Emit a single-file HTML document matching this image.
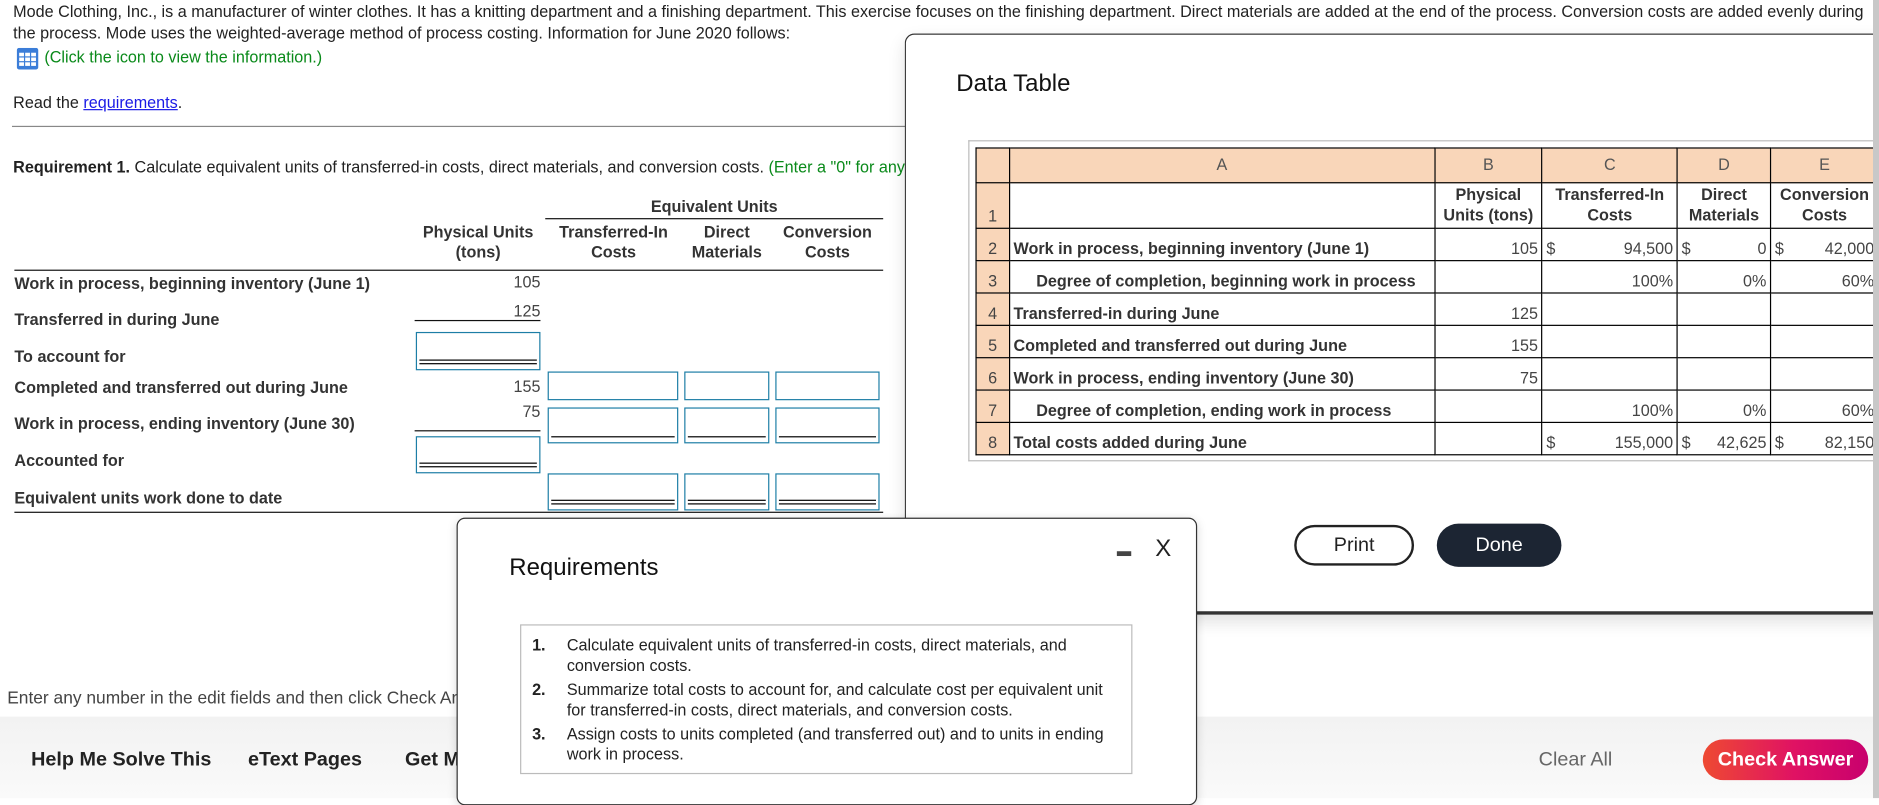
<!DOCTYPE html>
<html><head><meta charset="utf-8"><style>
*{box-sizing:border-box;margin:0;padding:0}
html,body{width:1879px;height:798px;overflow:hidden;background:#fff}
#w{position:absolute;left:0;top:0;width:1568px;height:666px;transform:scale(1.19834);transform-origin:0 0;font-family:"Liberation Sans",Arial,sans-serif;color:#222;font-size:13.5px}
.a{position:absolute;white-space:nowrap}
.b{font-weight:bold}
.c{text-align:center}
.r{text-align:right}
.ln{position:absolute;height:0;border-top:1.5px solid #111}
.inp{position:absolute;border:1px solid #1d7ea6;background:#fff}
.dbl{position:absolute;left:5px;right:5px;height:4px;border-top:1.5px solid #000;border-bottom:1.5px solid #000}
.sgl{position:absolute;left:5px;right:5px;border-top:1.3px solid #000}
table.dt{position:absolute;left:814px;top:123px;border-collapse:collapse;font-size:13.5px}
table.dt td{border:1.3px solid #000;height:27px;padding:0 3px;vertical-align:bottom;padding-bottom:2px;white-space:nowrap}
table.dt td.n{background:#f9d6b9;text-align:center;width:28px;padding:0 0 2px 0;color:#444}
table.dt tr.h td{background:#f9d6b9;color:#555;text-align:center;height:29px;vertical-align:middle}
</style></head><body><div id="w">
<div class="a" style="left:11px;top:2px;color:#222">Mode Clothing, Inc., is a manufacturer of winter clothes. It has a knitting department and a finishing department. This exercise focuses on the finishing department. Direct materials are added at the end of the process. Conversion costs are added evenly during</div>
<div class="a" style="left:11px;top:20px">the process. Mode uses the weighted-average method of process costing. Information for June 2020 follows:</div>
<svg class="a" style="left:14px;top:40px" width="18" height="18" viewBox="0 0 18 18"><rect x="0" y="0" width="18" height="18" rx="2" fill="#3b7dd8"/><g fill="#fff"><rect x="2" y="4" width="4" height="3"/><rect x="7" y="4" width="4" height="3"/><rect x="12" y="4" width="4" height="3"/><rect x="2" y="8" width="4" height="3"/><rect x="7" y="8" width="4" height="3"/><rect x="12" y="8" width="4" height="3"/><rect x="2" y="12" width="4" height="3"/><rect x="7" y="12" width="4" height="3"/><rect x="12" y="12" width="4" height="3"/></g></svg>
<div class="a" style="left:37px;top:40px;color:#0a8a1a">(Click the icon to view the information.)</div>
<div class="a" style="left:11px;top:78px">Read the <span style="color:#1a1ae6;text-decoration:underline">requirements</span>.</div>
<div class="a" style="left:10px;top:105px;width:750px;border-top:1px solid #888"></div>
<div class="a" style="left:11px;top:132px"><b>Requirement 1.</b> Calculate equivalent units of transferred-in costs, direct materials, and conversion costs. <span style="color:#0a8a1a">(Enter a "0" for any zero balances.)</span></div>

<div class="a b" style="left:455px;top:165px;width:282px;text-align:center;color:#333">Equivalent Units</div>
<div class="ln" style="left:455px;top:182px;width:282px"></div>
<div class="a b c" style="left:342px;top:185px;width:114px;line-height:17px;color:#333">Physical Units<br>(tons)</div>
<div class="a b c" style="left:452px;top:185px;width:120px;line-height:17px;color:#333">Transferred-In<br>Costs</div>
<div class="a b c" style="left:566px;top:185px;width:81px;line-height:17px;color:#333">Direct<br>Materials</div>
<div class="a b c" style="left:641px;top:185px;width:99px;line-height:17px;color:#333">Conversion<br>Costs</div>
<div class="ln" style="left:12px;top:225px;width:725px"></div>

<div class="a b" style="left:12px;top:229px;color:#333">Work in process, beginning inventory (June 1)</div>
<div class="a r" style="left:380px;top:228px;width:71px;color:#444">105</div>
<div class="a b" style="left:12px;top:259px;color:#333">Transferred in during June</div>
<div class="a r" style="left:380px;top:252px;width:71px;color:#444">125</div>
<div class="ln" style="left:346px;top:267px;width:105px;border-top-width:1px"></div>
<div class="inp" style="left:347px;top:277px;width:104px;height:32px"><div class="dbl" style="top:22px;left:2px;right:2px"></div></div>
<div class="a b" style="left:12px;top:290px;color:#333">To account for</div>
<div class="a b" style="left:12px;top:316px;color:#333">Completed and transferred out during June</div>
<div class="a r" style="left:380px;top:315px;width:71px;color:#444">155</div>
<div class="inp" style="left:457px;top:310px;width:109px;height:24px"></div>
<div class="inp" style="left:571px;top:310px;width:71px;height:24px"></div>
<div class="inp" style="left:647px;top:310px;width:87px;height:24px"></div>
<div class="a b" style="left:12px;top:346px;color:#333">Work in process, ending inventory (June 30)</div>
<div class="a r" style="left:380px;top:336px;width:71px;color:#444">75</div>
<div class="ln" style="left:346px;top:359px;width:105px;border-top-width:1px"></div>
<div class="inp" style="left:457px;top:340px;width:109px;height:30px"><div class="sgl" style="top:23px;left:2px;right:2px"></div></div>
<div class="inp" style="left:571px;top:340px;width:71px;height:30px"><div class="sgl" style="top:23px;left:2px;right:2px"></div></div>
<div class="inp" style="left:647px;top:340px;width:87px;height:30px"><div class="sgl" style="top:23px;left:2px;right:2px"></div></div>
<div class="inp" style="left:347px;top:364px;width:104px;height:31px"><div class="dbl" style="top:21px;left:2px;right:2px"></div></div>
<div class="a b" style="left:12px;top:377px;color:#333">Accounted for</div>
<div class="a b" style="left:12px;top:408px;color:#333">Equivalent units work done to date</div>
<div class="inp" style="left:457px;top:395px;width:109px;height:31px"><div class="dbl" style="top:21px;left:2px;right:2px"></div></div>
<div class="inp" style="left:571px;top:395px;width:71px;height:31px"><div class="dbl" style="top:21px;left:2px;right:2px"></div></div>
<div class="inp" style="left:647px;top:395px;width:87px;height:31px"><div class="dbl" style="top:21px;left:2px;right:2px"></div></div>
<div class="ln" style="left:12px;top:427px;width:725px;border-top-width:1px"></div>

<div class="a" style="left:6px;top:575px;font-size:14.5px;color:#444">Enter any number in the edit fields and then click Check Answer.</div>
<div class="a" style="left:0;top:598px;width:1568px;height:68px;background:linear-gradient(#f2f2f2,#fafafa)"></div>
<div class="a b" style="left:26px;top:625px;font-size:16.5px;color:#222">Help Me Solve This</div>
<div class="a b" style="left:207px;top:625px;font-size:16.5px;color:#222">eText Pages</div>
<div class="a b" style="left:338px;top:625px;font-size:16.5px;color:#222">Get More Help</div>
<div class="a" style="left:1284px;top:625px;font-size:16.5px;color:#666">Clear All</div>
<div class="a b c" style="left:1421px;top:617px;width:138px;height:34px;line-height:34px;border-radius:17px;background:linear-gradient(90deg,#ee4a32,#e01263 55%,#c8006e);color:#fff;font-size:16.5px">Check Answer</div>

<!-- Data table modal -->
<div class="a" style="left:755px;top:28px;width:820px;height:485px;background:#fff;border:1.5px solid #333;border-right:none;border-top-left-radius:8px;border-bottom:3px solid #333;box-shadow:0 6px 14px rgba(0,0,0,.12)"></div>
<div class="a" style="left:798px;top:59px;font-size:20px;color:#111">Data Table</div>
<div class="a" style="left:808px;top:117px;width:760px;height:268px;border:1px solid #bbb;border-right:none"></div>
<table class="dt">
<tr class="h"><td class="n" style="padding:0"></td><td style="width:355px">A</td><td style="width:90px">B</td><td style="width:113px">C</td><td style="width:78px">D</td><td style="width:90px">E</td></tr>
<tr><td class="n" style="height:38px">1</td><td></td><td class="b c" style="line-height:17px;color:#333">Physical<br>Units (tons)</td><td class="b c" style="line-height:17px;color:#333">Transferred-In<br>Costs</td><td class="b c" style="line-height:17px;color:#333">Direct<br>Materials</td><td class="b c" style="line-height:17px;color:#333">Conversion<br>Costs</td></tr>
<tr><td class="n">2</td><td class="b" style="color:#333">Work in process, beginning inventory (June 1)</td><td class="r" style="color:#444">105</td><td style="color:#444">$<span style="float:right">94,500</span></td><td style="color:#444">$<span style="float:right">0</span></td><td style="color:#444">$<span style="float:right">42,000</span></td></tr>
<tr><td class="n">3</td><td class="b" style="color:#333;padding-left:22px">Degree of completion, beginning work in process</td><td></td><td class="r" style="color:#444">100%</td><td class="r" style="color:#444">0%</td><td class="r" style="color:#444">60%</td></tr>
<tr><td class="n">4</td><td class="b" style="color:#333">Transferred-in during June</td><td class="r" style="color:#444">125</td><td></td><td></td><td></td></tr>
<tr><td class="n">5</td><td class="b" style="color:#333">Completed and transferred out during June</td><td class="r" style="color:#444">155</td><td></td><td></td><td></td></tr>
<tr><td class="n">6</td><td class="b" style="color:#333">Work in process, ending inventory (June 30)</td><td class="r" style="color:#444">75</td><td></td><td></td><td></td></tr>
<tr><td class="n">7</td><td class="b" style="color:#333;padding-left:22px">Degree of completion, ending work in process</td><td></td><td class="r" style="color:#444">100%</td><td class="r" style="color:#444">0%</td><td class="r" style="color:#444">60%</td></tr>
<tr><td class="n">8</td><td class="b" style="color:#333">Total costs added during June</td><td></td><td style="color:#444">$<span style="float:right">155,000</span></td><td style="color:#444">$<span style="float:right">42,625</span></td><td style="color:#444">$<span style="float:right">82,150</span></td></tr>
</table>
<div class="a" style="left:1563px;top:0;width:5px;height:666px;background:#c8c8c8"></div>
<div class="a c" style="left:1080px;top:438px;width:100px;height:34px;line-height:30px;border:2px solid #222;border-radius:17px;background:#fff;font-size:16.5px;color:#222">Print</div>
<div class="a c" style="left:1199px;top:437px;width:104px;height:36px;line-height:36px;border-radius:18px;background:#1c2533;font-size:16.5px;color:#fff">Done</div>

<!-- Requirements modal -->
<div class="a" style="left:381px;top:432px;width:618px;height:240px;background:#fff;border:1.5px solid #333;border-radius:7px;box-shadow:0 2px 8px rgba(0,0,0,.15)"></div>
<div class="a" style="left:425px;top:463px;font-size:20px;color:#111">Requirements</div>
<div class="a" style="left:932px;top:460px;width:12px;height:4px;background:#444"></div>
<div class="a" style="left:964px;top:447px;font-size:20px;color:#222">X</div>
<div class="a" style="left:434px;top:521px;width:511px;height:125px;border:1px solid #bbb"></div>
<div class="a b" style="left:444px;top:531px">1.</div>
<div class="a" style="left:473px;top:531px;line-height:16.5px">Calculate equivalent units of transferred-in costs, direct materials, and<br>conversion costs.</div>
<div class="a b" style="left:444px;top:568px">2.</div>
<div class="a" style="left:473px;top:568px;line-height:16.5px">Summarize total costs to account for, and calculate cost per equivalent unit<br>for transferred-in costs, direct materials, and conversion costs.</div>
<div class="a b" style="left:444px;top:605px">3.</div>
<div class="a" style="left:473px;top:605px;line-height:16.5px">Assign costs to units completed (and transferred out) and to units in ending<br>work in process.</div>
</div></body></html>
